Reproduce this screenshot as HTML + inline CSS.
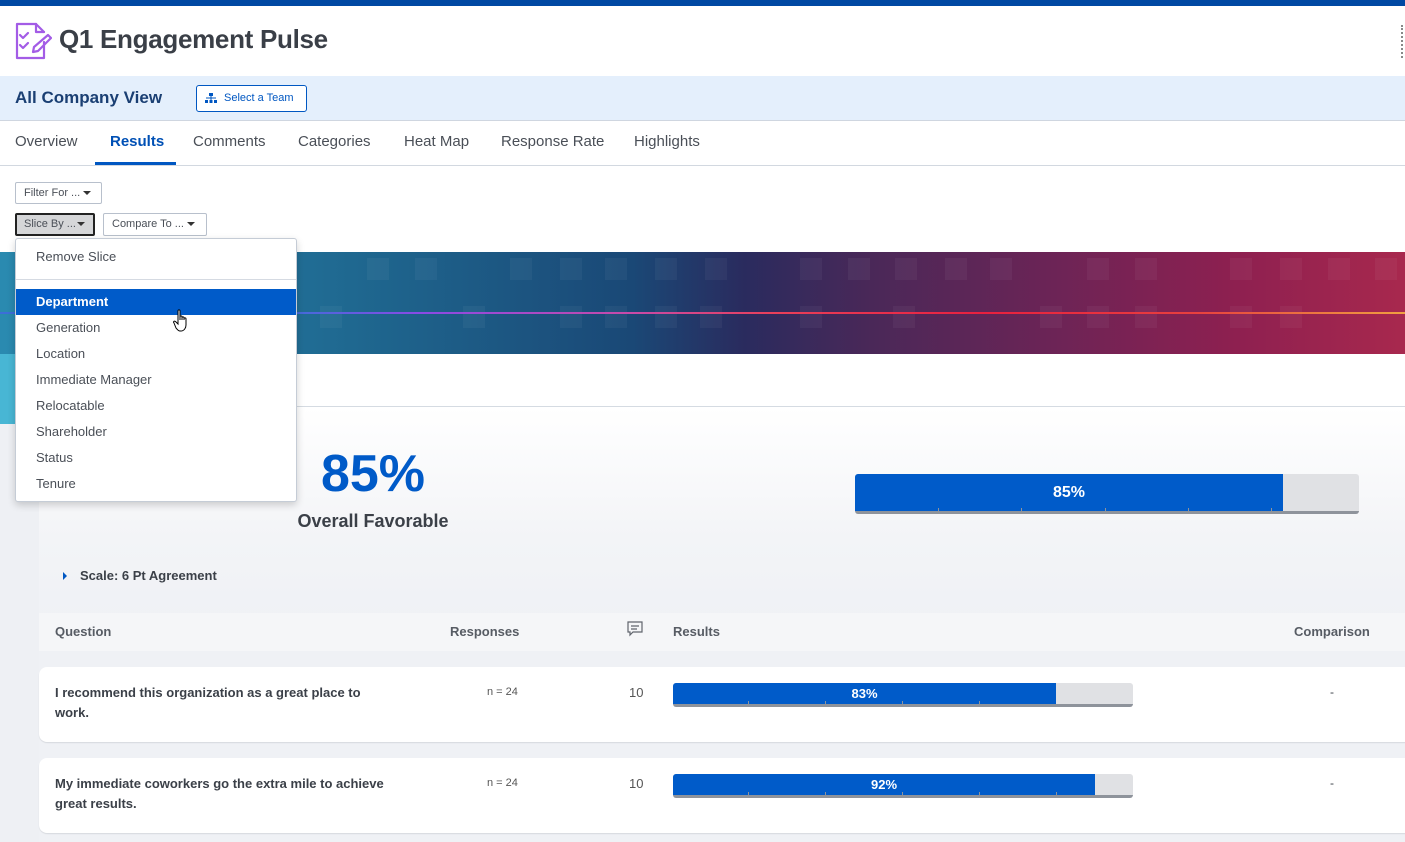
<!DOCTYPE html>
<html><head><meta charset="utf-8"><style>
*{box-sizing:border-box;margin:0;padding:0}
body{width:1405px;height:842px;overflow:hidden;position:relative;font-family:"Liberation Sans",Arial,sans-serif;background:#fff;color:#3b4048}
.a{position:absolute}
.tab{position:absolute;top:133px;font-size:15px;color:#4a4f57}
.btn{position:absolute;border:1px solid #b8c0cc;border-radius:2px;font-size:11px;color:#4a4f57;background:#fff;padding:0 8px;line-height:20px;white-space:nowrap}
.caret{display:inline-block;width:0;height:0;border-left:4px solid transparent;border-right:4px solid transparent;border-top:4px solid #333;vertical-align:middle;margin-left:3px}
.menu div{position:absolute;left:20px;font-size:13px;color:#4a4f57}
.sq{position:absolute;width:22px;height:22px;background:rgba(255,255,255,.045)}
.bar{position:absolute;background:#e0e1e4;border-radius:3px;border-bottom:3px solid #8e939b}
.fill{position:absolute;left:0;top:0;bottom:0;background:#005bc9;border-radius:3px 0 0 0;color:#fff;font-weight:bold;text-align:center}
.tick{position:absolute;bottom:0;width:1px;height:3px;background:#8e939b}
.row{position:absolute;left:39px;width:1380px;height:75px;background:#fff;border-radius:8px;box-shadow:0 1px 1px #d6d9de}
.q{position:absolute;left:16px;top:16px;font-size:13px;font-weight:bold;color:#3b4048;line-height:20px;width:330px}
</style></head><body>
<div class="a" style="left:0;top:0;width:1405px;height:6px;background:#0049a3"></div>
<svg class="a" style="left:14px;top:22px" width="38" height="38" viewBox="0 0 38 38" fill="none" stroke="#a35ce6" stroke-width="2.2" stroke-linejoin="round" stroke-linecap="round">
<path d="M22 2H3v34h27V20"/><path d="M22 2v8h8"/><path d="M22 2l8 8"/>
<path d="M6 13l3 3 5-5M6 23l3 3 5-5"/><path d="M34 13l3 3-13 13-5 1 1-5z"/></svg>
<div class="a" style="left:59px;top:24px;font-size:26px;font-weight:bold;color:#3a3f47;letter-spacing:-0.3px">Q1 Engagement Pulse</div>
<div class="a" style="left:1401px;top:25px;width:3px;height:33px;border-left:2px dotted #888"></div>
<div class="a" style="left:0;top:76px;width:1405px;height:45px;background:#e4effc;border-bottom:1px solid #cfd6e0"></div>
<div class="a" style="left:15px;top:88px;font-size:17px;font-weight:bold;color:#1a3f73">All Company View</div>
<div class="a" style="left:196px;top:85px;width:111px;height:27px;border:1px solid #0057c2;border-radius:3px;background:#fff;font-size:11px;color:#0057c2;line-height:25px;padding-left:27px">Select a Team</div>
<svg class="a" style="left:205px;top:93px" width="12" height="11" viewBox="0 0 12 11" fill="#0057c2"><rect x="4" y="0" width="4" height="3"/><rect x="0" y="7" width="3" height="3"/><rect x="4.5" y="7" width="3" height="3"/><rect x="9" y="7" width="3" height="3"/><rect x="1" y="4.5" width="10" height="1"/><rect x="5.5" y="3" width="1" height="4"/></svg>
<div class="tab" style="left:15px">Overview</div>
<div class="tab" style="left:110px;color:#0050b5;font-weight:bold">Results</div>
<div class="tab" style="left:193px">Comments</div>
<div class="tab" style="left:298px">Categories</div>
<div class="tab" style="left:404px">Heat Map</div>
<div class="tab" style="left:501px">Response Rate</div>
<div class="tab" style="left:634px">Highlights</div>
<div class="a" style="left:95px;top:162px;width:81px;height:3px;background:#0057c2"></div>
<div class="a" style="left:0;top:165px;width:1405px;height:1px;background:#d2d8e0"></div>
<div class="btn" style="left:15px;top:182px;width:87px;height:22px">Filter For ...<span class="caret"></span></div>
<div class="btn" style="left:15px;top:213px;width:80px;height:23px;background:#d5d6d8;border:2px solid #222;line-height:19px;padding:0 0 0 7px">Slice By ...<span class="caret" style="margin-left:1px"></span></div>
<div class="btn" style="left:103px;top:213px;width:104px;height:23px">Compare To ...<span class="caret"></span></div>
<!-- banner -->
<div class="a" style="left:0;top:252px;width:1405px;height:102px;background:linear-gradient(90deg,#2a8ab0 0%,#1f6890 25%,#1a4876 45%,#2a2b5e 53%,#4a2858 62%,#6c2456 75%,#8e2050 88%,#a8284e 100%);overflow:hidden">
<div class="sq" style="left:367px;top:6px"></div><div class="sq" style="left:415px;top:6px"></div><div class="sq" style="left:510px;top:6px"></div><div class="sq" style="left:560px;top:6px"></div><div class="sq" style="left:605px;top:6px"></div><div class="sq" style="left:655px;top:6px"></div><div class="sq" style="left:705px;top:6px"></div><div class="sq" style="left:800px;top:6px"></div><div class="sq" style="left:848px;top:6px"></div><div class="sq" style="left:895px;top:6px"></div><div class="sq" style="left:945px;top:6px"></div><div class="sq" style="left:990px;top:6px"></div><div class="sq" style="left:1087px;top:6px"></div><div class="sq" style="left:1135px;top:6px"></div><div class="sq" style="left:1230px;top:6px"></div><div class="sq" style="left:1280px;top:6px"></div><div class="sq" style="left:1328px;top:6px"></div><div class="sq" style="left:1375px;top:6px"></div>
<div class="sq" style="left:320px;top:54px"></div><div class="sq" style="left:463px;top:54px"></div><div class="sq" style="left:560px;top:54px"></div><div class="sq" style="left:605px;top:54px"></div><div class="sq" style="left:655px;top:54px"></div><div class="sq" style="left:700px;top:54px"></div><div class="sq" style="left:800px;top:54px"></div><div class="sq" style="left:893px;top:54px"></div><div class="sq" style="left:1040px;top:54px"></div><div class="sq" style="left:1087px;top:54px"></div><div class="sq" style="left:1135px;top:54px"></div><div class="sq" style="left:1230px;top:54px"></div><div class="sq" style="left:1280px;top:54px"></div>
<div class="a" style="left:0;top:60px;width:1405px;height:2px;background:linear-gradient(90deg,#3c6ed8 20%,#8a4ae6 30%,#c84aa8 45%,#e8405a 55%,#e8203e 70%,#e8403e 85%,#f0a040 100%)"></div>
</div>
<div class="a" style="left:0;top:354px;width:15px;height:70px;background:#48b6d4"></div>
<div class="a" style="left:0;top:354px;width:1405px;height:488px;background:#fff;z-index:-1"></div>
<div class="a" style="left:15px;top:406px;width:1390px;height:1px;background:#d5dbe2"></div>
<div class="a" style="left:0;top:424px;width:39px;height:418px;background:#eef0f4"></div>
<div class="a" style="left:39px;top:407px;width:1366px;height:435px;background:linear-gradient(180deg,#fff 0%,#f3f4f7 30%,#eff1f5 50%,#eff1f5 100%)"></div>
<div class="a" style="left:263px;top:444px;width:220px;text-align:center;font-size:52px;font-weight:bold;color:#005ac8;letter-spacing:0px">85%</div>
<div class="a" style="left:263px;top:511px;width:220px;text-align:center;font-size:18px;font-weight:bold;color:#3b4048">Overall Favorable</div>
<div class="bar" style="left:855px;top:474px;width:504px;height:40px"><div class="fill" style="width:428px;line-height:37px;font-size:16px">85%</div>
<div class="tick" style="left:83px"></div><div class="tick" style="left:166px"></div><div class="tick" style="left:250px"></div><div class="tick" style="left:333px"></div><div class="tick" style="left:416px"></div></div>
<div class="a" style="left:63px;top:572px;width:0;height:0;border-top:4px solid transparent;border-bottom:4px solid transparent;border-left:4px solid #0057c2"></div>
<div class="a" style="left:80px;top:568px;font-size:13px;font-weight:bold;color:#3b4048">Scale: 6 Pt Agreement</div>
<div class="a" style="left:39px;top:613px;width:1366px;height:38px;background:#f5f6f8"></div>
<div class="a" style="left:55px;top:624px;font-size:13px;font-weight:bold;color:#575c64">Question</div>
<div class="a" style="left:450px;top:624px;font-size:13px;font-weight:bold;color:#575c64">Responses</div>
<svg class="a" style="left:627px;top:621px" width="16" height="16" viewBox="0 0 16 16" fill="none" stroke="#60656d" stroke-width="1.2"><path d="M1 1h14v10H6l-3 3v-3H1z"/><path d="M4 5h8M4 8h6"/></svg>
<div class="a" style="left:673px;top:624px;font-size:13px;font-weight:bold;color:#575c64">Results</div>
<div class="a" style="left:1294px;top:624px;font-size:13px;font-weight:bold;color:#575c64">Comparison</div>
<div class="row" style="top:667px"><div class="q">I recommend this organization as a great place to work.</div>
<div class="a" style="left:448px;top:19px;font-size:11px;color:#555">n = 24</div><div class="a" style="left:590px;top:18px;font-size:13px;color:#555">10</div>
<div class="bar" style="left:634px;top:16px;width:460px;height:24px"><div class="fill" style="width:383px;line-height:21px;font-size:13px">83%</div><div class="tick" style="left:75px"></div><div class="tick" style="left:152px"></div><div class="tick" style="left:229px"></div><div class="tick" style="left:306px"></div></div>
<div class="a" style="left:1291px;top:18px;font-size:12px">-</div></div>
<div class="row" style="top:758px"><div class="q">My immediate coworkers go the extra mile to achieve great results.</div>
<div class="a" style="left:448px;top:19px;font-size:11px;color:#555">n = 24</div><div class="a" style="left:590px;top:18px;font-size:13px;color:#555">10</div>
<div class="bar" style="left:634px;top:16px;width:460px;height:24px"><div class="fill" style="width:422px;line-height:21px;font-size:13px">92%</div><div class="tick" style="left:75px"></div><div class="tick" style="left:152px"></div><div class="tick" style="left:229px"></div><div class="tick" style="left:306px"></div><div class="tick" style="left:383px"></div></div>
<div class="a" style="left:1291px;top:18px;font-size:12px">-</div></div>
<div class="a menu" style="left:15px;top:238px;width:282px;height:264px;background:#fff;border:1px solid #c5ccd6;border-radius:3px;box-shadow:0 3px 8px rgba(0,0,0,.18);z-index:5">
<div style="top:10px">Remove Slice</div>
<div style="left:0;top:40px;width:280px;height:1px;background:#d5dae2"></div>
<div style="left:0;top:50px;width:280px;height:26px;background:#005bc9"></div>
<div style="top:55px;color:#fff;font-weight:bold">Department</div>
<div style="top:81px">Generation</div><div style="top:107px">Location</div><div style="top:133px">Immediate Manager</div><div style="top:159px">Relocatable</div><div style="top:185px">Shareholder</div><div style="top:211px">Status</div><div style="top:237px">Tenure</div>
</div>
<svg class="a" style="left:173px;top:309px;z-index:6" width="18" height="24" viewBox="0 0 18 24"><path d="M5 2c0-1.5 2-1.5 2 0v9l0-3c0-1.5 2-1.5 2 0v3l0-2c0-1.5 2-1.5 2 0v2l0-1c0-1.5 2-1.5 2 0v6c0 3-2 6-5 6H7c-2 0-3-2-4-3L1 14c-1-1 0-2.5 1.5-1.5L5 15z" fill="#fff" stroke="#000" stroke-width="1"/></svg>
</body></html>
